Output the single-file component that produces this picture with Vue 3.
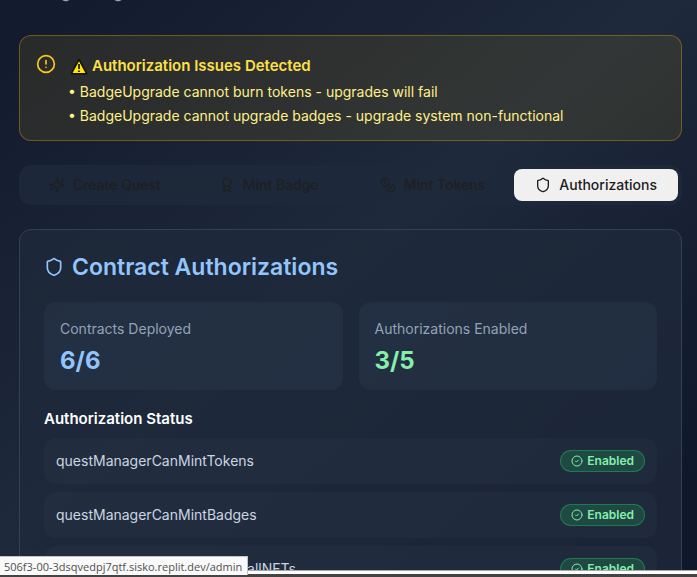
<script setup>
import { ref } from 'vue'

const tabs = ref([
  { id: 'quest', label: 'Create Quest', icon: 'sparkles' },
  { id: 'badge', label: 'Mint Badge', icon: 'award' },
  { id: 'tokens', label: 'Mint Tokens', icon: 'coins' },
  { id: 'auth', label: 'Authorizations', icon: 'shield' }
])
const active = ref('auth')

const icons = {
  sparkles: [
    'M9.94 15.5A2 2 0 0 0 8.5 14.06l-6.14-1.58a.5.5 0 0 1 0-.96L8.5 9.94A2 2 0 0 0 9.94 8.5l1.58-6.14a.5.5 0 0 1 .96 0l1.58 6.14a2 2 0 0 0 1.44 1.44l6.14 1.58a.5.5 0 0 1 0 .96l-6.14 1.58a2 2 0 0 0-1.44 1.44l-1.58 6.14a.5.5 0 0 1-.96 0z',
    'M20 3v4',
    'M22 5h-4',
    'M4 17v2',
    'M5 18H3'
  ],
  award: [
    'M15.48 12.89l1.51 8.53a.5.5 0 0 1-.81.47l-3.58-2.69a1 1 0 0 0-1.2 0l-3.58 2.69a.5.5 0 0 1-.81-.47l1.51-8.53',
    'M18 8a6 6 0 1 1-12 0a6 6 0 1 1 12 0'
  ],
  coins: [
    'M14 8a6 6 0 1 1-12 0a6 6 0 1 1 12 0',
    'M18.09 10.37A6 6 0 1 1 10.34 18',
    'M7 6h1v4',
    'M16.71 13.88l.7.71-2.82 2.82'
  ],
  shield: [
    'M20 13c0 5-3.5 7.5-7.66 8.95a1 1 0 0 1-.67-.01C7.5 20.5 4 18 4 13V6a1 1 0 0 1 1-1c2 0 4.5-1.2 6.24-2.72a1.17 1.17 0 0 1 1.52 0C14.51 3.81 17 5 19 5a1 1 0 0 1 1 1z'
  ]
}

const issues = [
  'BadgeUpgrade cannot burn tokens - upgrades will fail',
  'BadgeUpgrade cannot upgrade badges - upgrade system non-functional'
]

const stats = [
  { label: 'Contracts Deployed', value: '6/6', tone: 'blue' },
  { label: 'Authorizations Enabled', value: '3/5', tone: 'green' }
]

const permissions = [
  'questManagerCanMintTokens',
  'questManagerCanMintBadges',
  'questManagerCanMintWithCallNFTs'
]
</script>

<template>
  <div class="window">
    <main class="page">
      <p class="subtitle">Manage badges</p>

      <section class="alert" role="alert">
        <svg class="icon alert-icon" viewBox="0 0 24 24" aria-hidden="true">
          <circle cx="12" cy="12" r="10" />
          <path d="M12 8v4M12 16h.01" />
        </svg>
        <div>
          <h2 class="alert-title">
            <svg class="warning" viewBox="0 0 18 17" aria-hidden="true">
              <path d="M9 1.5 16.7 15.7H1.3z" fill="#ffe500" stroke="#14140f" stroke-width="1.6" stroke-linejoin="round" />
              <path d="M9 6v5M9 12.4v1.6" stroke="#14140f" stroke-width="1.7" />
            </svg>
            Authorization Issues Detected
          </h2>
          <ul class="issues">
            <li v-for="issue in issues" :key="issue">• {{ issue }}</li>
          </ul>
        </div>
      </section>

      <div class="tabs" role="tablist">
        <button
          v-for="tab in tabs"
          :key="tab.id"
          type="button"
          role="tab"
          class="tab"
          :class="{ active: active === tab.id }"
          :aria-selected="active === tab.id"
          @click="active = tab.id"
        >
          <svg class="icon tab-icon" viewBox="0 0 24 24" aria-hidden="true">
            <path v-for="d in icons[tab.icon]" :key="d" :d="d" />
          </svg>
          {{ tab.label }}
        </button>
      </div>

      <section class="card">
        <h1 class="card-title">
          <svg class="icon title-icon" viewBox="0 0 24 24" aria-hidden="true">
            <path :d="icons.shield[0]" />
          </svg>
          Contract Authorizations
        </h1>

        <div class="stats">
          <div v-for="stat in stats" :key="stat.label" class="stat">
            <div class="stat-label">{{ stat.label }}</div>
            <div class="stat-value" :class="stat.tone">{{ stat.value }}</div>
          </div>
        </div>

        <h3 class="section-title">Authorization Status</h3>
        <ul class="rows">
          <li v-for="name in permissions" :key="name" class="row">
            <span>{{ name }}</span>
            <span class="pill">
              <svg class="icon pill-icon" viewBox="0 0 24 24" aria-hidden="true">
                <circle cx="12" cy="12" r="10" />
                <path d="m9 12 2 2 4-4" />
              </svg>
              Enabled
            </span>
          </li>
        </ul>
      </section>
    </main>

    <footer class="window-edge"></footer>
    <div class="link-status">506f3-00-3dsqvedpj7qtf.sisko.replit.dev/admin</div>
  </div>
</template>

<style>
body {
  margin: 0;
  background: #0f172a;
}
</style>

<style scoped>
.window {
  position: relative;
  display: flex;
  flex-direction: column;
  height: 100vh;
  overflow: hidden;
  font-family: Inter, "Liberation Sans", sans-serif;
  font-size: 14px;
  line-height: 24px;
  color: #cbd5e1;
}

.page {
  flex: 1;
  min-height: 0;
  overflow: hidden;
  padding: 0 15px 0 19px;
  background: linear-gradient(to bottom right, #121a2d, #1e293b 48%, #0f172a 92%);
}

h1,
h2,
h3,
p,
ul {
  margin: 0;
  padding: 0;
  list-style: none;
}

.icon {
  flex: none;
  fill: none;
  stroke: currentColor;
  stroke-width: 2;
  stroke-linecap: round;
  stroke-linejoin: round;
}

.subtitle {
  margin-top: -20px;
  margin-bottom: 31px;
  font-size: 16px;
  color: #94a3b8;
}

.alert {
  display: flex;
  gap: 12px;
  padding: 16px 16px 12px;
  border: 1px solid rgba(234, 179, 8, 0.35);
  border-radius: 12px;
  background: rgba(234, 179, 8, 0.1);
  color: #fef08a;
}

.alert-icon {
  width: 20px;
  height: 20px;
  margin-top: 2px;
  color: #facc15;
}

.alert-title {
  display: flex;
  align-items: center;
  gap: 4px;
  font-size: 15px;
  font-weight: 600;
  line-height: 28px;
  color: #fde047;
}

.warning {
  width: 18px;
  height: 17px;
  margin-left: 2px;
}

.tabs {
  display: grid;
  grid-template-columns: repeat(4, 1fr);
  margin: 24px 0;
  padding: 4px;
  border-radius: 12px;
  background: rgba(30, 41, 59, 0.8);
}

.tab {
  display: flex;
  align-items: center;
  justify-content: center;
  gap: 8px;
  height: 32px;
  padding: 0;
  border: 0;
  border-radius: 8px;
  background: none;
  font: inherit;
  font-weight: 500;
  color: #1e2022;
}

.tab.active {
  background: #f0f0f0;
  color: #1c1c1c;
}

.tab-icon {
  width: 16px;
  height: 16px;
}

.card {
  padding: 24px;
  border: 1px solid #334155;
  border-radius: 12px;
  background: rgba(30, 41, 59, 0.8);
}

.card-title {
  display: flex;
  align-items: center;
  gap: 8px;
  font-size: 23px;
  font-weight: 600;
  line-height: 26px;
  color: #93c5fd;
}

.title-icon {
  width: 20px;
  height: 20px;
}

.stats {
  display: grid;
  grid-template-columns: 1fr 1fr;
  gap: 16px;
  margin: 22px 0 16px;
}

.stat {
  padding: 16px 16px 12px;
  border-radius: 12px;
  background: rgba(51, 65, 85, 0.3);
}

.stat-label {
  line-height: 22px;
  color: #94a3b8;
}

.stat-value {
  margin-top: 4px;
  font-size: 24px;
  font-weight: 700;
  line-height: 34px;
}

.blue {
  color: #93c5fd;
}

.green {
  color: #86efac;
}

.section-title {
  margin-bottom: 6px;
  font-size: 15px;
  font-weight: 600;
  line-height: 26px;
  color: #ffffff;
}

.rows {
  display: grid;
  gap: 8px;
}

.row {
  display: flex;
  align-items: center;
  justify-content: space-between;
  padding: 11px 12px;
  border-radius: 12px;
  background: rgba(51, 65, 85, 0.2);
}

.pill {
  display: flex;
  align-items: center;
  gap: 4px;
  padding: 0 10px;
  border: 1px solid rgba(34, 197, 94, 0.4);
  border-radius: 12px;
  background: rgba(34, 197, 94, 0.2);
  font-size: 12px;
  font-weight: 600;
  line-height: 20px;
  color: #86efac;
}

.pill-icon {
  width: 12px;
  height: 12px;
}

.window-edge {
  height: 3px;
  border-top: 1px solid #a9a9ab;
  border-bottom: 3px solid #444444;
  background: #ffffff;
}

.link-status {
  position: absolute;
  bottom: 2px;
  left: 0;
  padding: 2px 5px 0 4px;
  border-top: 1px solid #c4c4c4;
  border-right: 1px solid #c4c4c4;
  background: #f9f9f9;
  font-family: "Open Sans", "Noto Sans", sans-serif;
  font-size: 11px;
  line-height: 16px;
  color: #505050;
}
</style>
